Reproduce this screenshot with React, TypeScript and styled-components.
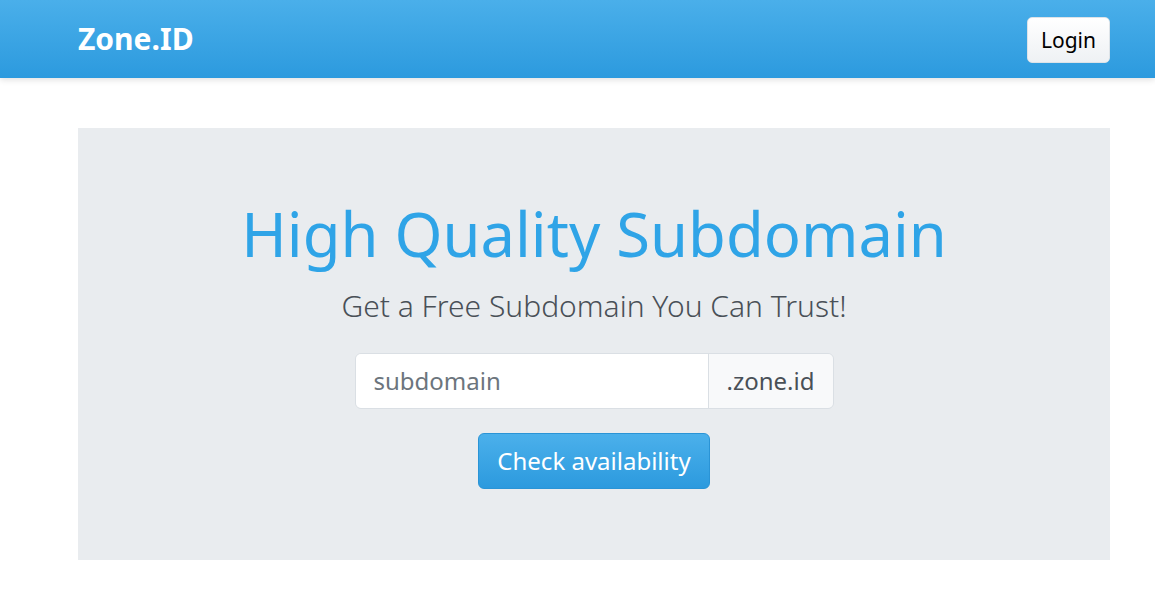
import styled, { createGlobalStyle } from "styled-components";

const GlobalStyle = createGlobalStyle`
  body {
    margin: 0;
    background: #fff;
    font-family: "Noto Sans", "Open Sans", sans-serif;
    color: #495057;
  }
`;

export default function App() {
  return (
    <>
      <GlobalStyle />
      <Navbar>
        <Brand>Zone.ID</Brand>
        <LoginButton>Login</LoginButton>
      </Navbar>
      <Jumbotron>
        <Title>High Quality Subdomain</Title>
        <Lead>Get a Free Subdomain You Can Trust!</Lead>
        <InputGroup>
          <Input type="text" placeholder="subdomain" />
          <Addon>.zone.id</Addon>
        </InputGroup>
        <CheckButton>Check availability</CheckButton>
      </Jumbotron>
    </>
  );
}

const Navbar = styled.nav`
  height: 78px;
  box-sizing: border-box;
  padding: 0 45px 0 78px;
  display: flex;
  align-items: center;
  justify-content: space-between;
  background: linear-gradient(#4aafea, #2c9ade);
  box-shadow: 0 2px 6px rgba(0, 0, 0, 0.12);
`;

const Brand = styled.a`
  color: #fff;
  font-weight: 700;
  font-size: 30px;
  margin-top: -2px;
`;

const LoginButton = styled.button`
  height: 46px;
  margin-top: 2px;
  padding: 0 13px;
  border: 1px solid #dde3e8;
  border-radius: 5px;
  background: linear-gradient(#ffffff, #eef1f4);
  color: #000;
  font-family: "Noto Sans", sans-serif;
  font-size: 21px;
  cursor: pointer;
`;

const Jumbotron = styled.section`
  margin: 50px 45px 0 78px;
  height: 432px;
  box-sizing: border-box;
  padding-top: 69px;
  background: #e9ecef;
  display: flex;
  flex-direction: column;
  align-items: center;
`;

const Title = styled.h1`
  margin: 0;
  font-size: 61.5px;
  font-weight: 400;
  line-height: 1.2;
  color: #2fa4e7;
`;

const Lead = styled.p`
  margin: 17px 0 0;
  font-size: 30px;
  font-weight: 300;
  line-height: 1.2;
  color: #495057;
`;

const InputGroup = styled.div`
  margin-top: 29px;
  display: flex;
  width: 479px;
  height: 56px;
  box-sizing: border-box;
  border: 1px solid #dadfe4;
  border-radius: 6px;
  overflow: hidden;
`;

const Input = styled.input`
  flex: 1;
  min-width: 0;
  border: 0;
  padding: 0 18px;
  font-family: "Noto Sans", sans-serif;
  font-size: 24px;
  color: #495057;
  background: #fff;
  outline: none;
  &::placeholder {
    color: #6c757d;
  }
`;

const Addon = styled.span`
  width: 125px;
  box-sizing: border-box;
  border-left: 1px solid #dadfe4;
  display: flex;
  align-items: center;
  justify-content: center;
  background: #f8f9fa;
  font-size: 24px;
  color: #495057;
`;

const CheckButton = styled.button`
  margin-top: 24px;
  height: 56px;
  padding: 0 18px;
  border: 1px solid #2a94d6;
  border-radius: 6px;
  background: linear-gradient(#4bb0eb, #2c9ade);
  color: #fff;
  font-family: "Noto Sans", sans-serif;
  font-size: 24px;
  cursor: pointer;
`;
